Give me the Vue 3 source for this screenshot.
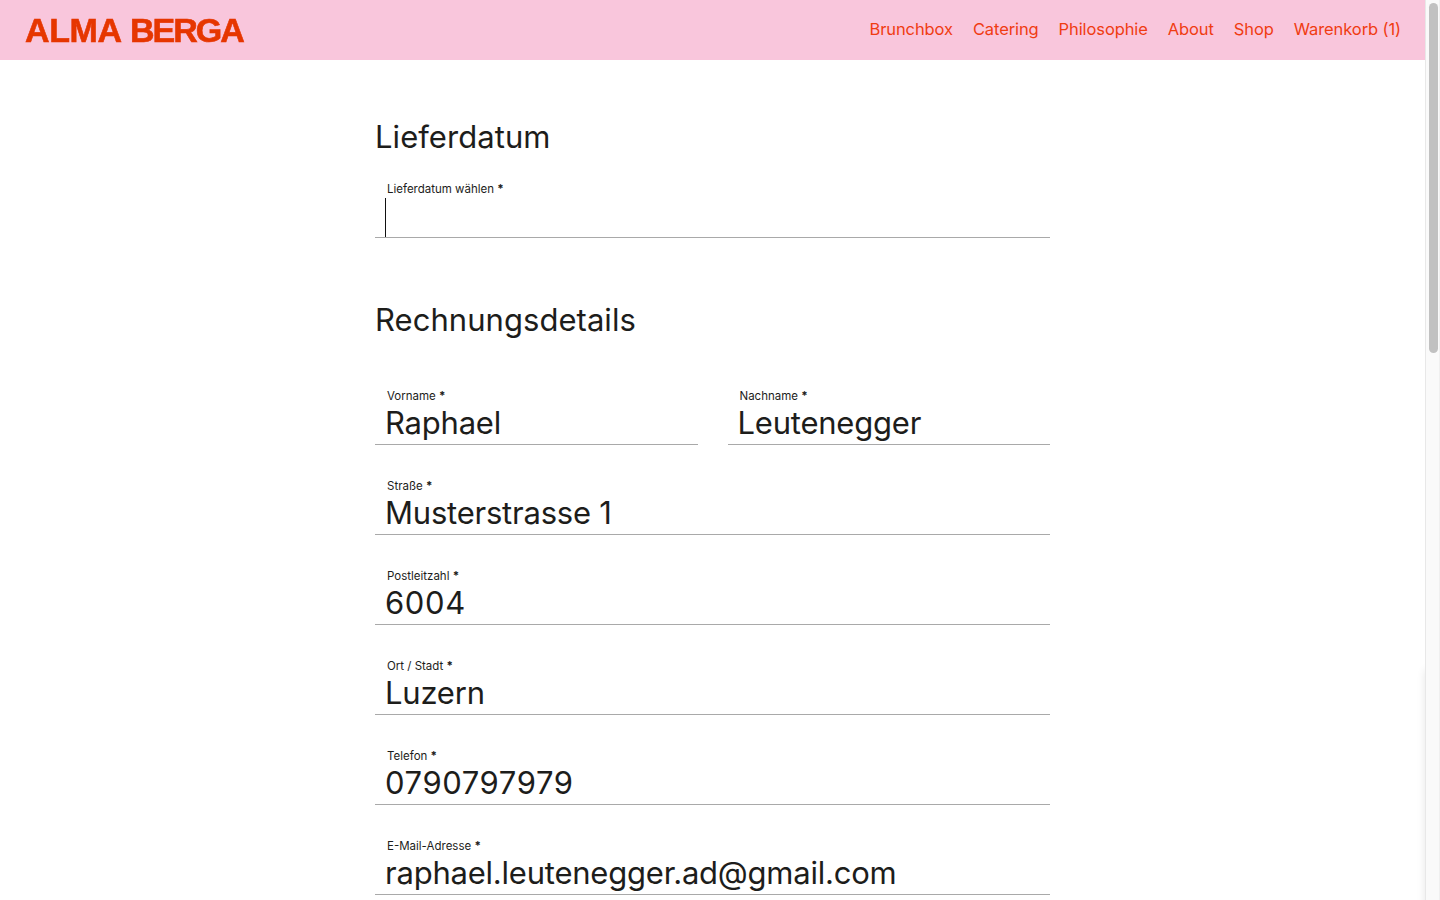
<script setup>
const nav = ['Brunchbox', 'Catering', 'Philosophie', 'About', 'Shop', 'Warenkorb (1)']
const fields = [
  { label: 'Straße', value: 'Musterstrasse 1' },
  { label: 'Postleitzahl', value: '6004', digits: true },
  { label: 'Ort / Stadt', value: 'Luzern' },
  { label: 'Telefon', value: '0790797979', digits: true },
  { label: 'E-Mail-Adresse', value: 'raphael.leutenegger.ad@gmail.com' }
]
</script>

<template>
  <div class="window">
    <div class="page">
      <header class="top">
        <div class="logo"><span class="alma">ALMA</span> <span class="berga">BERGA</span></div>
        <nav class="nav">
          <a v-for="n in nav" :key="n" class="link">{{ n }}</a>
        </nav>
      </header>
      <main class="content">
        <h2 class="title first">Lieferdatum</h2>
        <div class="field date">
          <label class="label">Lieferdatum wählen <b>*</b></label>
          <div class="value empty"><span class="caret"></span></div>
        </div>
        <h2 class="title second">Rechnungsdetails</h2>
        <div class="pair">
          <div class="field">
            <label class="label">Vorname <b>*</b></label>
            <div class="value">Raphael</div>
          </div>
          <div class="field">
            <label class="label">Nachname <b>*</b></label>
            <div class="value">Leutenegger</div>
          </div>
        </div>
        <div v-for="f in fields" :key="f.label" class="field row">
          <label class="label">{{ f.label }} <b>*</b></label>
          <div class="value" :class="{ digits: f.digits }">{{ f.value }}</div>
        </div>
      </main>
      <div class="edge-shadow"></div>
    </div>
    <aside class="scrollbar"><span class="thumb"></span></aside>
  </div>
</template>

<style>
html, body { margin: 0; overflow: hidden; background: #fff; }
</style>

<style scoped>
.window { display: flex; width: 1440px; height: 900px; overflow: hidden; font-family: Inter, "Liberation Sans", sans-serif; color: #1d1d1b; }
.page { position: relative; width: 1425px; height: 900px; overflow: hidden; }
.top { display: flex; justify-content: space-between; align-items: center; height: 60px; padding: 0 24px 0 25px; background: #f9c6dc; }
.logo { font-family: "Liberation Sans", Arial, sans-serif; font-weight: 700; font-size: 34px; word-spacing: -1px; color: #e63600; filter: blur(0.7px); -webkit-text-stroke: 0.6px #e63600; line-height: 62px; }
.alma { letter-spacing: -0.4px; }
.berga { letter-spacing: -2px; }
.nav { display: flex; gap: 20px; padding-bottom: 2px; }
.link { font-size: 16.5px; letter-spacing: -0.1px; font-weight: 400; color: #f03c12; line-height: 56px; }
.content { width: 675px; margin: 0 auto; }
.title { margin: 0; font-weight: 400; font-size: 31px; letter-spacing: 0.05px; line-height: 40px; }
.first { padding-top: 57px; }
.second { margin-top: 62px; }
.date { margin-top: 23px; }
.pair { display: grid; grid-template-columns: 1fr 1fr; gap: 30px; margin-top: 47px; }
.row { margin-top: 32px; }
.field { border-bottom: 1px solid #a9a9a9; }
.label { display: block; padding-left: 12px; font-size: 11.5px; line-height: 18px; color: #1d1d1b; }
.label b { font-weight: 700; }
.value { padding-left: 10px; font-size: 31px; letter-spacing: -0.22px; font-weight: 400; line-height: 35px; height: 39px; }
.digits { letter-spacing: 0.6px; }
.empty { display: flex; align-items: flex-end; }
.caret { width: 1px; height: 39px; background: #111; }
.edge-shadow { position: absolute; right: -10px; top: 670px; width: 10px; height: 240px; box-shadow: 0 0 8px rgba(0,0,0,.1); }
.scrollbar { width: 15px; height: 900px; box-sizing: border-box; background: #fafafa; border-left: 1px solid #e8e8e8; border-right: 1px solid #f0f0f0; padding: 3px 2px; }
.thumb { display: block; width: 9px; height: 350px; margin-left: 1px; background: #c1c1c1; border-radius: 5px; }
</style>
